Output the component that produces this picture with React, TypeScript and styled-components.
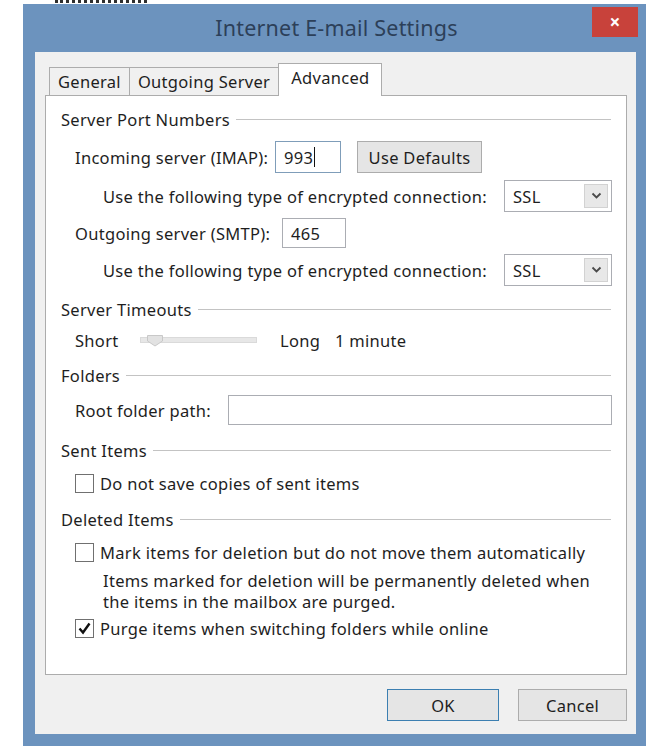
import React from "react";
import styled, { createGlobalStyle } from "styled-components";

const GlobalStyle = createGlobalStyle`
  html, body {
    margin: 0;
    padding: 0;
    background: #ffffff;
  }
  body {
    font-family: "Noto Sans", "Open Sans", sans-serif;
    font-size: 16.5px;
    letter-spacing: 0.3px;
    color: #1e1e1e;
  }
`;

const Page = styled.div`
  padding: 0 0 8px 23px;
`;

// scrap of the window behind, cut off by the top edge
const BehindScrap = styled.div`
  height: 4px;
  width: 92px;
  margin-left: 32px;
  box-sizing: border-box;
  border-top: 3px dotted #2e2e2e;
`;

const Window = styled.div`
  width: 623px;
  background: #6c93be;
  padding: 0 10px 12px 12px;
  box-sizing: border-box;
`;

const TitleBar = styled.div`
  height: 48px;
  display: grid;
  grid-template-columns: 1fr auto 1fr;
  align-items: start;
`;

const Title = styled.div`
  grid-column: 2;
  align-self: center;
  font-size: 21.5px;
  letter-spacing: 0.2px;
  color: #2c4059;
  margin: 0 0 2px 2px;
`;

const CloseButton = styled.div`
  grid-column: 3;
  justify-self: end;
  margin-top: 3px;
  margin-right: -2px;
  width: 46px;
  height: 30px;
  background: #c8423b;
  color: #ffffff;
  display: flex;
  align-items: center;
  justify-content: center;
  font-size: 19px;
  font-weight: 700;
  line-height: 1;
`;

const Body = styled.div`
  background: #f0f0f0;
  padding: 11px 9px 13px 10px;
`;

const TabStrip = styled.div`
  display: flex;
  align-items: flex-end;
  padding-left: 5px;
  height: 32px;
`;

const Tab = styled.div<{ $active?: boolean }>`
  height: ${(p) => (p.$active ? "33px" : "28px")};
  padding: 0 ${(p) => (p.$active ? "12px" : "8px")};
  display: flex;
  align-items: center;
  background: ${(p) => (p.$active ? "#ffffff" : "#f0f0f0")};
  border: 1px solid #acacac;
  border-bottom: none;
  margin-left: -1px;
  box-sizing: border-box;
  position: relative;
  z-index: ${(p) => (p.$active ? 2 : 1)};
  margin-bottom: ${(p) => (p.$active ? "-1px" : "0")};
  padding-bottom: ${(p) => (p.$active ? "5px" : "0")};
`;

const Panel = styled.div`
  background: #ffffff;
  border: 1px solid #acacac;
  height: 580px;
  box-sizing: border-box;
  padding: 13px 14px 0 15px;
  position: relative;
  z-index: 1;
`;

const Row = styled.div<{ $top: number; $h: number; $indent?: number }>`
  display: flex;
  align-items: center;
  height: ${(p) => p.$h}px;
  margin-top: ${(p) => p.$top}px;
  padding-left: ${(p) => p.$indent ?? 0}px;
  white-space: nowrap;
`;

const GroupHeader = styled(Row)`
  gap: 6px;
  &::after {
    content: "";
    flex: 1;
    height: 1px;
    background: #c3c3c3;
    margin-right: 1px;
  }
`;

const Label = styled.span<{ $w?: number }>`
  display: inline-block;
  flex-shrink: 0;
  ${(p) => (p.$w ? `width: ${p.$w}px;` : "")}
`;

const TextBox = styled.div<{ $w?: number; $focus?: boolean; $grow?: boolean }>`
  height: 100%;
  ${(p) => (p.$w ? `width: ${p.$w}px;` : "")}
  ${(p) => (p.$grow ? "flex: 1;" : "")}
  box-sizing: border-box;
  border: 1px solid ${(p) => (p.$focus ? "#7f9db9" : "#abadb3")};
  background: #ffffff;
  display: flex;
  align-items: center;
  padding-left: 8px;
`;

const Caret = styled.span`
  display: inline-block;
  width: 1px;
  height: 20px;
  background: #111;
  margin-left: 1px;
`;

const PushButton = styled.div<{ $w: number; $default?: boolean; $gap?: number }>`
  width: ${(p) => p.$w}px;
  margin-left: ${(p) => p.$gap ?? 0}px;
  height: 100%;
  box-sizing: border-box;
  background: #e5e5e5;
  border: 1px solid ${(p) => (p.$default ? "#3c7fb1" : "#acacac")};
  display: flex;
  align-items: center;
  justify-content: center;
`;

const Combo = styled.div`
  margin-left: auto;
  width: 108px;
  height: 100%;
  box-sizing: border-box;
  border: 1px solid #abadb3;
  background: #ffffff;
  display: flex;
  align-items: center;
  padding: 0 3px 0 8px;
`;

const ComboArrow = styled.div`
  margin-left: auto;
  width: 24px;
  height: 24px;
  box-sizing: border-box;
  background: #e8e8e8;
  border: 1px solid #d2d2d2;
  display: flex;
  align-items: center;
  justify-content: center;
`;

const SliderTrack = styled.div`
  position: relative;
  flex-shrink: 0;
  width: 115px;
  height: 4px;
  background: #e7e7e7;
  border: 1px solid #dadada;
  margin-right: 23px;
`;

const SliderThumb = styled.svg`
  position: absolute;
  left: 6px;
  top: -3px;
`;

const CheckBox = styled.div`
  width: 19px;
  height: 19px;
  box-sizing: border-box;
  border: 1px solid #707070;
  background: #ffffff;
  margin-right: 6px;
  display: flex;
  align-items: center;
  justify-content: center;
  flex-shrink: 0;
`;

const Note = styled.div<{ $top: number }>`
  margin-top: ${(p) => p.$top}px;
  padding-left: 42px;
  line-height: 21px;
`;

const Footer = styled.div`
  display: flex;
  justify-content: flex-end;
  gap: 19px;
  height: 32px;
  margin-top: 14px;
`;

const Chevron = () => (
  <svg width="11" height="8" viewBox="0 0 11 8">
    <path d="M1.5 1.5 L5.5 5.5 L9.5 1.5" fill="none" stroke="#4a4a4a" strokeWidth="1.8" />
  </svg>
);

const Check = () => (
  <svg width="15" height="15" viewBox="0 0 15 15">
    <path d="M2.5 7.5 L6 11.5 L12.5 2.5" fill="none" stroke="#111" strokeWidth="2.4" />
  </svg>
);

const App: React.FC = () => {
  return (
    <>
      <GlobalStyle />
      <Page>
        <BehindScrap />
        <Window>
          <TitleBar>
            <Title>Internet E-mail Settings</Title>
            <CloseButton>×</CloseButton>
          </TitleBar>
          <Body>
            <TabStrip>
              <Tab>General</Tab>
              <Tab>Outgoing Server</Tab>
              <Tab $active>Advanced</Tab>
            </TabStrip>
            <Panel>
              <GroupHeader $top={0} $h={20}>Server Port Numbers</GroupHeader>
              <Row $top={12} $h={32} $indent={14}>
                <Label $w={200}>Incoming server (IMAP):</Label>
                <TextBox $w={66} $focus>
                  993
                  <Caret />
                </TextBox>
                <PushButton $w={125} $gap={16}>Use Defaults</PushButton>
              </Row>
              <Row $top={7} $h={32} $indent={42}>
                <Label>Use the following type of encrypted connection:</Label>
                <Combo>
                  SSL
                  <ComboArrow>
                    <Chevron />
                  </ComboArrow>
                </Combo>
              </Row>
              <Row $top={6} $h={30} $indent={14}>
                <Label $w={207}>Outgoing server (SMTP):</Label>
                <TextBox $w={64}>465</TextBox>
              </Row>
              <Row $top={6} $h={32} $indent={42}>
                <Label>Use the following type of encrypted connection:</Label>
                <Combo>
                  SSL
                  <ComboArrow>
                    <Chevron />
                  </ComboArrow>
                </Combo>
              </Row>
              <GroupHeader $top={13} $h={20}>Server Timeouts</GroupHeader>
              <Row $top={9} $h={24} $indent={14}>
                <Label $w={65}>Short</Label>
                <SliderTrack>
                  <SliderThumb width="16" height="12" viewBox="0 0 16 12">
                    <path d="M0.5 0.5 H15.5 V6 L8 11 L0.5 6 Z" fill="#e2e2e2" stroke="#c8c8c8" />
                  </SliderThumb>
                </SliderTrack>
                <Label $w={55}>Long</Label>
                <Label>1 minute</Label>
              </Row>
              <GroupHeader $top={13} $h={20}>Folders</GroupHeader>
              <Row $top={10} $h={30} $indent={14}>
                <Label $w={153}>Root folder path:</Label>
                <TextBox $grow />
              </Row>
              <GroupHeader $top={15} $h={20}>Sent Items</GroupHeader>
              <Row $top={12} $h={22} $indent={14}>
                <CheckBox />
                Do not save copies of sent items
              </Row>
              <GroupHeader $top={15} $h={20}>Deleted Items</GroupHeader>
              <Row $top={12} $h={22} $indent={14}>
                <CheckBox />
                Mark items for deletion but do not move them automatically
              </Row>
              <Note $top={7}>
                Items marked for deletion will be permanently deleted when
                <br />
                the items in the mailbox are purged.
              </Note>
              <Row $top={5} $h={22} $indent={14}>
                <CheckBox>
                  <Check />
                </CheckBox>
                Purge items when switching folders while online
              </Row>
            </Panel>
            <Footer>
              <PushButton $w={112} $default>OK</PushButton>
              <PushButton $w={109}>Cancel</PushButton>
            </Footer>
          </Body>
        </Window>
      </Page>
    </>
  );
};

export default App;
